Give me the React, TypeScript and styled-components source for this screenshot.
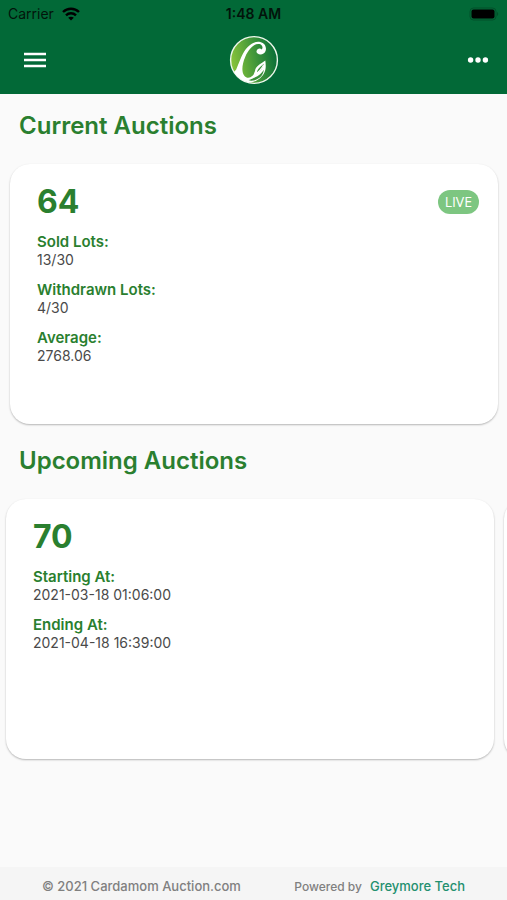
import React from "react";
import styled, { createGlobalStyle } from "styled-components";

const GlobalStyle = createGlobalStyle`
  *, *::before, *::after { box-sizing: border-box; }
  body {
    margin: 0;
    background: #fafafa;
    font-family: Inter, "Liberation Sans", sans-serif;
  }
  h1, h2, h3, p, dl, dd { margin: 0; }
`;

const Screen = styled.div`
  display: flex;
  flex-direction: column;
  min-height: 100vh;
  overflow-x: hidden;
`;

const Header = styled.header`
  background: #026937;
`;

const StatusBar = styled.div`
  display: grid;
  grid-template-columns: 1fr auto 1fr;
  align-items: center;
  height: 28px;
  padding: 0 8px;
  color: #02140b;
  font-size: 14px;
  line-height: 20px;
`;

const Carrier = styled.span`
  display: flex;
  align-items: center;
  gap: 8px;
`;

const Clock = styled.time`
  font-weight: 600;
`;

const BatterySlot = styled.span`
  display: flex;
  justify-content: flex-end;
`;

const AppBar = styled.div`
  display: grid;
  grid-template-columns: 1fr auto 1fr;
  align-items: center;
  height: 66px;
  padding: 0 13px 3px 14px;
`;

const IconButton = styled.button<{ $end?: boolean }>`
  display: flex;
  justify-self: ${(p) => (p.$end ? "end" : "start")};
  align-items: center;
  justify-content: center;
  width: ${(p) => (p.$end ? "32px" : "42px")};
  height: 42px;
  padding: 0;
  border: 0;
  background: none;
  color: #fff;
  cursor: pointer;
`;

const Logo = styled.svg`
  display: block;
`;

const Main = styled.main`
  flex: 1;
`;

const Section = styled.section`
  padding-bottom: 5px;
`;

const SectionTitle = styled.h2`
  padding: 16px 19px 22px;
  color: #2a7f2f;
  font-size: 24px;
  font-weight: 600;
  line-height: 32px;
`;

const Track = styled.div<{ $peek?: boolean }>`
  display: flex;
  gap: 10px;
  padding: ${(p) => (p.$peek ? "0 13px 0 6px" : "0 9px 0 10px")};
`;

const Card = styled.article`
  flex: 0 0 100%;
  min-height: 260px;
  padding: 17px 19px 24px 27px;
  border-radius: 20px;
  background: #fff;
  box-shadow: 0 1px 2px rgba(0, 0, 0, 0.28);
`;

const CardHead = styled.div`
  display: flex;
  align-items: center;
  justify-content: space-between;
  height: 42px;
`;

const Number = styled.h3`
  color: #2a7f2f;
  font-size: 32px;
  font-weight: 700;
  line-height: 40px;
`;

const Badge = styled.span`
  padding: 0 7px;
  border-radius: 12px;
  background: #7dc681;
  color: #fff;
  font-family: "Open Sans", "Noto Sans", sans-serif;
  font-size: 14px;
  line-height: 24px;
`;

const Facts = styled.dl`
  display: flex;
  flex-direction: column;
  gap: 13px;
  padding-top: 10px;
`;

const Fact = styled.div``;

const Label = styled.dt`
  color: #2a7f2f;
  font-size: 15px;
  font-weight: 600;
  line-height: 18px;
`;

const Value = styled.dd`
  color: #4a4a4a;
  font-size: 14px;
  line-height: 17px;
`;

const Footer = styled.footer`
  display: flex;
  align-items: center;
  justify-content: space-between;
  height: 33px;
  padding: 5px 42px 0;
  background: #f5f5f5;
  color: #808080;
  font-size: 13px;
  font-weight: 500;
  line-height: 20px;
`;

const Credit = styled.p`
  display: flex;
  align-items: baseline;
  gap: 8px;
  font-size: 12px;
`;

const CreditLink = styled.a`
  color: #23906f;
  font-size: 13px;
  text-decoration: none;
`;

type Entry = { label: string; value: string };

function AuctionCard({ id, live, facts }: { id: string; live?: boolean; facts: Entry[] }) {
  return (
    <Card>
      <CardHead>
        <Number>{id}</Number>
        {live && <Badge>LIVE</Badge>}
      </CardHead>
      <Facts>
        {facts.map((f) => (
          <Fact key={f.label}>
            <Label>{f.label}</Label>
            <Value>{f.value}</Value>
          </Fact>
        ))}
      </Facts>
    </Card>
  );
}

const WifiIcon = () => (
  <svg width="18" height="14" viewBox="0 0 18 14" fill="none" stroke="#000" strokeWidth="2.4" aria-hidden="true">
    <path d="M1 5C5.5.6 12.5.6 17 5" />
    <path d="M4 8.3c2.8-2.7 7.2-2.7 10 0" />
    <path d="M9 13.6 6.2 10.8c1.5-1.4 4.1-1.4 5.6 0z" fill="#000" stroke="none" />
  </svg>
);

const BatteryIcon = () => (
  <svg width="30" height="14" viewBox="0 0 30 14" aria-hidden="true">
    <rect x="1" y="1" width="26" height="12" rx="3.5" fill="none" stroke="#02502b" />
    <rect x="2.5" y="2.5" width="23" height="9" rx="2" fill="#000" />
    <path d="M28 5v4c1.6-.6 1.6-3.400 0-4z" fill="#02502b" />
  </svg>
);

const MenuIcon = () => (
  <svg width="24" height="18" viewBox="0 0 24 18" stroke="#fff" strokeWidth="2.6" aria-hidden="true">
    <path d="M1 3h22M1 9h22M1 15h22" />
  </svg>
);

const MoreIcon = () => (
  <svg width="22" height="8" viewBox="0 0 22 8" fill="#fff" aria-hidden="true">
    <circle cx="3.600" cy="4" r="2.700" />
    <circle cx="11" cy="4" r="2.700" />
    <circle cx="18.400" cy="4" r="2.700" />
  </svg>
);

const BrandLogo = () => (
  <Logo width="50" height="50" viewBox="0 0 50 50" role="img" aria-label="Cardamom Auction">
    <defs>
      <linearGradient id="leaf" x1="0" y1=".6" x2="1" y2=".4">
        <stop offset="0" stopColor="#8cc63a" />
        <stop offset=".5" stopColor="#45993a" />
        <stop offset="1" stopColor="#076d38" />
      </linearGradient>
    </defs>
    <circle cx="25" cy="25" r="23.400" fill="url(#leaf)" stroke="#eef7ec" strokeWidth="1.400" />
    <path
      fill="#fff"
      d="M27.500 16.200C27 19 31.500 20.500 34.500 18.600C38.500 16 37.800 8.300 31.200 6.900C24 5.500 16.500 12 12.300 22C10.300 27 8.600 31 7.200 34.500L5 37C8 42 15 47.500 22 47.500C29.500 46 35.500 40.500 36.500 34C37 31 36.600 28 36.300 25.500C31.500 29 26.500 31.300 26 36L24.500 39.800C22 43 18 44 15.500 41C12.200 37 13 29.500 16.200 22C19.800 13.500 26 7.800 30.500 9.100C33.500 10 34.300 13 32.700 14.500C31 12.300 27.900 13.600 27.500 16.200Z"
    />
    <path fill="#388f39" d="M34.800 28.800C31.800 31.500 28.600 33.500 28 37.600C31.400 36 34 33.300 34.800 28.800Z" />
    <path fill="none" stroke="#fff" strokeWidth="1.100" d="M34.500 30C32.500 34.500 28 38.500 22.500 42.500" />
    <path fill="#388f39" d="M25 42.700C30 41 33 38 34.800 34.800C34.500 39.800 30.500 44.300 24.500 45.600C22.500 46 20.500 45.500 19.500 44.900C21.500 44.700 23.500 43.600 25 42.700Z" />
  </Logo>
);

export default function App() {
  return (
    <>
      <GlobalStyle />
      <Screen>
        <Header>
          <StatusBar>
            <Carrier>
              Carrier <WifiIcon />
            </Carrier>
            <Clock>1:48 AM</Clock>
            <BatterySlot>
              <BatteryIcon />
            </BatterySlot>
          </StatusBar>
          <AppBar>
            <IconButton type="button" aria-label="Menu">
              <MenuIcon />
            </IconButton>
            <BrandLogo />
            <IconButton type="button" aria-label="More options" $end>
              <MoreIcon />
            </IconButton>
          </AppBar>
        </Header>
        <Main>
          <Section>
            <SectionTitle>Current Auctions</SectionTitle>
            <Track>
              <AuctionCard
                id="64"
                live
                facts={[
                  { label: "Sold Lots:", value: "13/30" },
                  { label: "Withdrawn Lots:", value: "4/30" },
                  { label: "Average:", value: "2768.06" },
                ]}
              />
            </Track>
          </Section>
          <Section>
            <SectionTitle>Upcoming Auctions</SectionTitle>
            <Track $peek>
              <AuctionCard
                id="70"
                facts={[
                  { label: "Starting At:", value: "2021-03-18 01:06:00" },
                  { label: "Ending At:", value: "2021-04-18 16:39:00" },
                ]}
              />
              <Card aria-hidden="true" />
            </Track>
          </Section>
        </Main>
        <Footer>
          <p>© 2021 Cardamom Auction.com</p>
          <Credit>
            Powered by <CreditLink href="#greymore">Greymore Tech</CreditLink>
          </Credit>
        </Footer>
      </Screen>
    </>
  );
}
